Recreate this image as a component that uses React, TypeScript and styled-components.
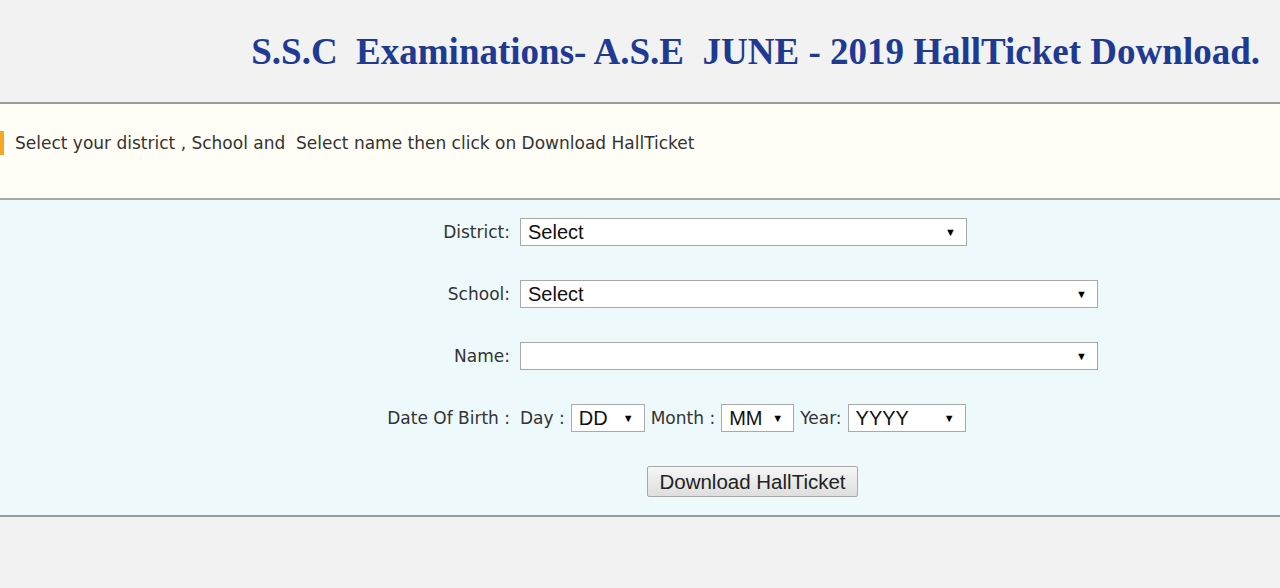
import styled, { createGlobalStyle } from "styled-components";

const Global = createGlobalStyle`
  html, body { margin: 0; padding: 0; background: #f2f2f2; }
  body { font-family: "DejaVu Sans", Verdana, sans-serif; }
`;

const Header = styled.div`
  height: 104px;
  display: flex;
  align-items: center;
  justify-content: flex-end;
  padding-right: 20px;
  border-bottom: 2px solid #9a9a9a;
  box-sizing: border-box;
`;

const Title = styled.h1`
  margin: 0;
  font-family: "Liberation Serif", "Times New Roman", serif;
  font-weight: bold;
  font-size: 37px;
  color: #1f3a93;
  white-space: pre;
`;

const Notice = styled.div`
  height: 96px;
  background: #fffdf6;
  border-bottom: 2px solid #a8a8a8;
  box-sizing: border-box;
  padding-top: 27px;
`;

const NoticeText = styled.div`
  border-left: 4px solid #f5a623;
  padding-left: 11px;
  font-size: 17px;
  line-height: 24px;
  color: #333;
  white-space: pre;
`;

const FormArea = styled.div`
  background: #eef9fc;
  height: 317px;
  border-bottom: 2px solid #9a9a9a;
  box-sizing: border-box;
  padding-top: 18px;
`;

const Row = styled.div`
  display: grid;
  grid-template-columns: 510px 1fr;
  column-gap: 10px;
  align-items: center;
  height: 28px;
  margin-bottom: 34px;
`;

const Label = styled.span`
  text-align: right;
  font-size: 17px;
  color: #333;
  white-space: pre;
`;

const Field = styled.div`
  display: flex;
  align-items: center;
  gap: 6px;
`;

const Select = styled.div<{ $w: number }>`
  width: ${(p) => p.$w}px;
  height: 28px;
  box-sizing: border-box;
  background: #fff;
  border: 1px solid #a9a9a9;
  display: flex;
  align-items: center;
  padding: 0 10px 0 7px;
  font-family: "Liberation Sans", Arial, sans-serif;
  font-size: 20px;
  color: #111;
  &::after {
    content: "▼";
    margin-left: auto;
    font-size: 11px;
    color: #000;
  }
`;

const ButtonRow = styled.div`
  display: flex;
  padding-left: 647px;
`;

const Button = styled.button`
  width: 211px;
  height: 31px;
  border: 1px solid #a8a8a8;
  border-radius: 2px;
  background: linear-gradient(#f6f6f6, #dedede);
  font-family: "Liberation Sans", Arial, sans-serif;
  font-size: 20.5px;
  color: #222;
  padding: 0;
`;

export default function App() {
  return (
    <>
      <Global />
      <Header>
        <Title>{"S.S.C  Examinations- A.S.E  JUNE - 2019 HallTicket Download."}</Title>
      </Header>
      <Notice>
        <NoticeText>{"Select your district , School and  Select name then click on Download HallTicket"}</NoticeText>
      </Notice>
      <FormArea>
        <Row>
          <Label>District:</Label>
          <Select $w={447}>Select</Select>
        </Row>
        <Row>
          <Label>School:</Label>
          <Select $w={578}>Select</Select>
        </Row>
        <Row>
          <Label>Name:</Label>
          <Select $w={578} />
        </Row>
        <Row>
          <Label>{"Date Of Birth :"}</Label>
          <Field>
            <Label>Day :</Label>
            <Select $w={74}>DD</Select>
            <Label>Month :</Label>
            <Select $w={73}>MM</Select>
            <Label>Year:</Label>
            <Select $w={118}>YYYY</Select>
          </Field>
        </Row>
        <ButtonRow>
          <Button>Download HallTicket</Button>
        </ButtonRow>
      </FormArea>
    </>
  );
}
